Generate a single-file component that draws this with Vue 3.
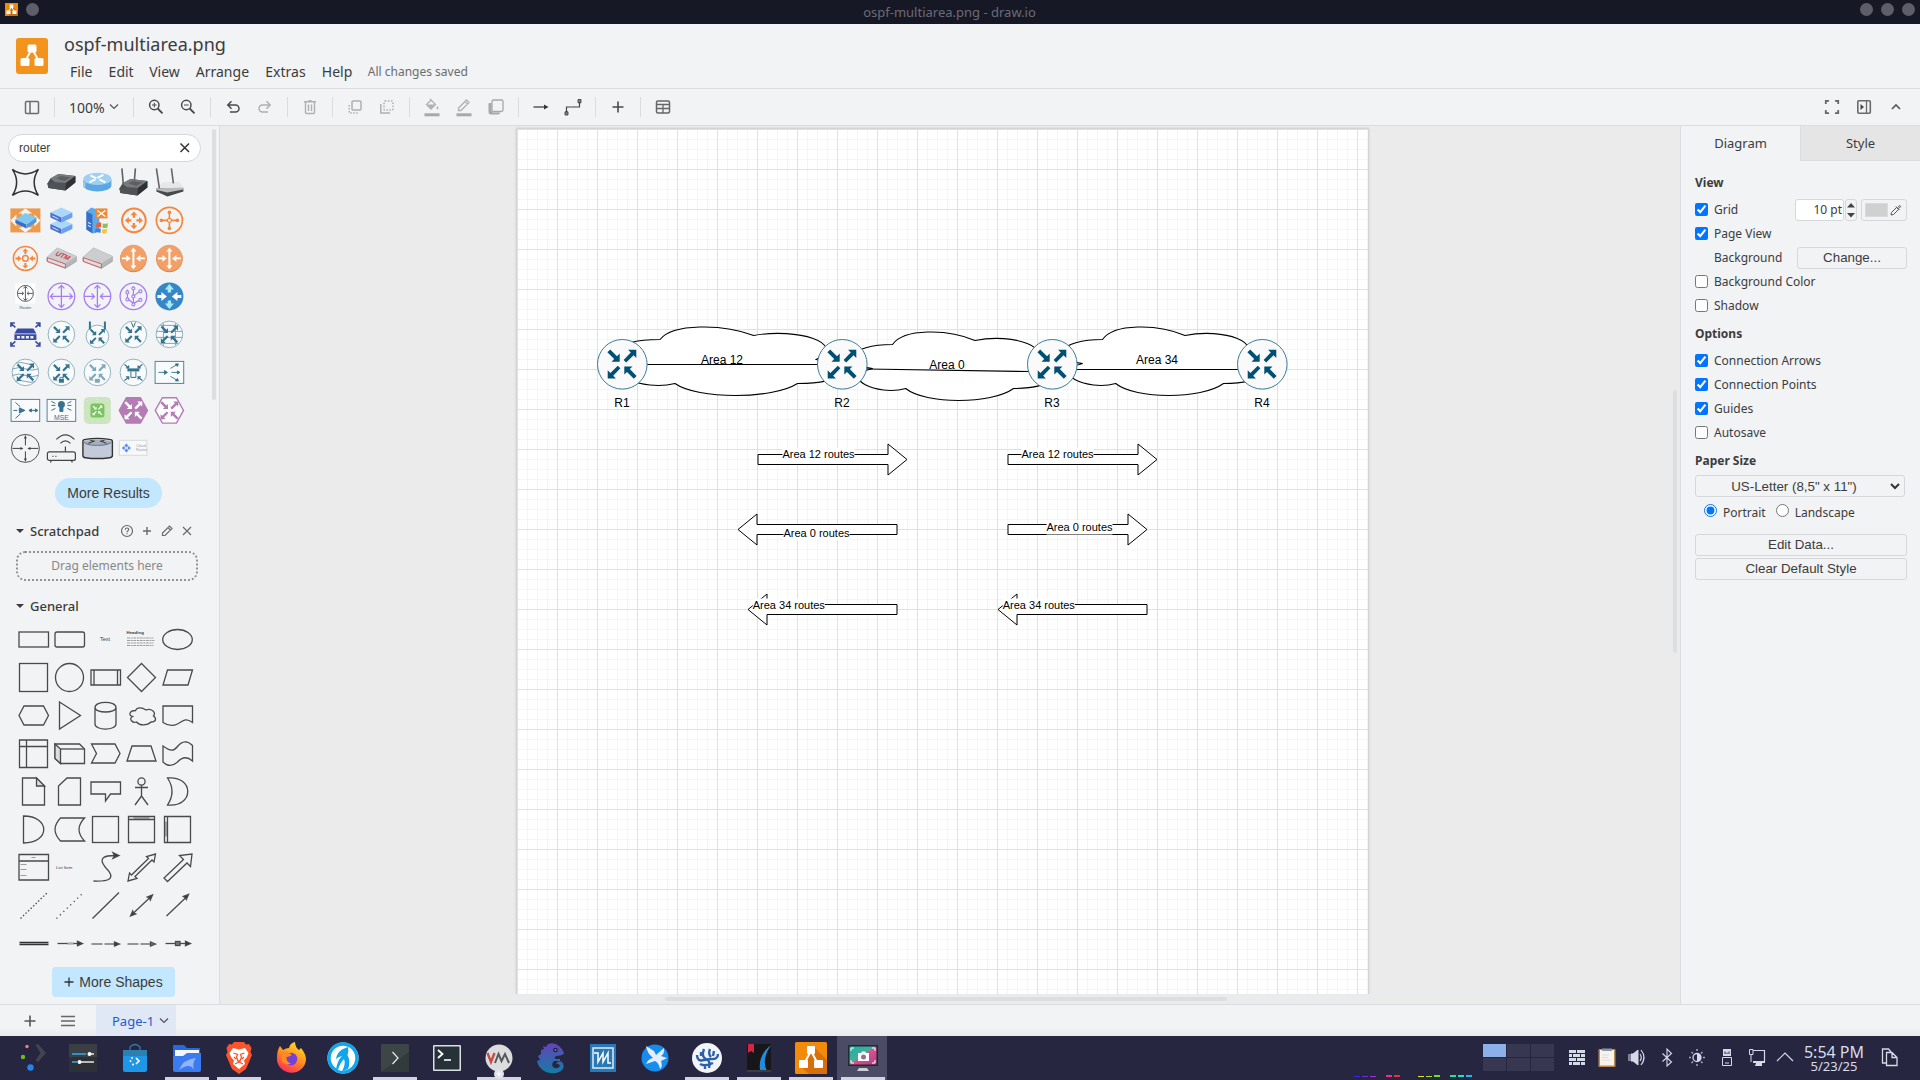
<script setup>
const ROUTER =
  'M-14.6-11.8L-11.8-14.6L-5-7.8L-2.3-10.5V-2.3H-10.5L-7.8-5Z' +
  'M14.6 11.8L11.8 14.6L5 7.8L2.3 10.5V2.3H10.5L7.8 5Z' +
  'M14.3-14.3V-6.1L11.6-8.8L4.2-1.6L1.6-4.2L8.8-11.6L6.1-14.3Z' +
  'M-14.3 14.3V6.1L-11.6 8.8L-4.2 1.6L-1.6 4.2L-8.8 11.6L-6.1 14.3Z'

const menus = [
  { t: 'File', w: 38.6 }, { t: 'Edit', w: 40.6 }, { t: 'View', w: 46.6 },
  { t: 'Arrange', w: 69.5 }, { t: 'Extras', w: 56.5 }, { t: 'Help', w: 46 },
]

/* ---- search result palette (36 x 38 cells) ---- */
const g = (t, s) => `<g transform="${t}">${s}</g>`
const at = (s, k = 1, x = 18, y = 19) => g(`translate(${x} ${y}) scale(${k})`, s)
const rt = (c, k) => at(`<path d="${ROUTER}" fill="${c}"/>`, k)
const ring = (c, f = 'none', w = 1) => `<circle cx="18" cy="19" r="13.3" fill="${f}" stroke="${c}" stroke-width="${w}"/>`
const T = '#36738f'
const TL = '#8fb4c4'
const cisco = (extra = '', c = T) => ring(TL, '#f9fafb') + rt(c, 0.57) + extra
const arrowOut = 'M-3-1.4H-6V-4L-10.5 0L-6 4V1.4H-3Z'
const rot4 = (d, c) => [0, 90, 180, 270].map(a => `<path d="${d}" fill="${c}" transform="rotate(${a})"/>`).join('')
const darkBox = '<path d="M4 20L7 15L15 10.500L32 12.500V19L22 27L5 24.500Z" fill="#4b4e50"/><path d="M7 15L15 10.500L32 12.500L22.500 19.500L12 19Z" fill="#777b7d"/><path d="M4 20L12 19L22.500 19.500L22 27L5 24.500Z" fill="#505355"/><path d="M13 15L17 12.500L27 14L21 17.500Z" fill="#5d6063"/><path d="M22.500 19.500L32 12.500V19L22 27Z" fill="#2f3234"/>'
const orangeRouter = '<circle cx="18" cy="19.4" r="13.4" fill="#d9844c"/><circle cx="18" cy="18.6" r="13.2" fill="#f2a067"/>' +
  at('<path d="M-11.5-.9H-7V-3.3L-2.7 0L-7 3.3V.9H-11.5ZM11.5-.9H7V-3.3L2.7 0L7 3.3V.9H11.5Z" fill="#fff"/><path d="M0-11L3-7H1V7H3L0 11L-3 7H-1V-7H-3Z" fill="#fff"/>')
const server = y => `<path d="M7 ${y}L18 ${y - 5}L29 ${y}L18 ${y + 5}Z" fill="#a9d8f8"/><path d="M7 ${y}L18 ${y + 5}V${y + 10}L7 ${y + 5}Z" fill="#4a6fd0"/><path d="M29 ${y}L18 ${y + 5}V${y + 10}L29 ${y + 5}Z" fill="#6da0ee"/><path d="M9 ${y + 3.5}L15 ${y + 6.5}" stroke="#dceaff" stroke-width="1"/>`
const redBox = t => `<path d="M3.5 18L14 8.5L33 17V22L22 29L3.5 22Z" fill="#b4b6b8" stroke="#8f9193" stroke-width=".5"/><path d="M3.5 18L14 8.5L33 17L22 24Z" fill="#cbcdce"/><path d="M4 18.3L22 24.6V28.5L4 22Z" fill="#e2dcdc" stroke="#d3555c" stroke-width=".9"/>${t}`
const hex = (f, c) => `<path d="M3.9 19L11 6.3H25L32.1 19L25 31.7H11Z" fill="${f}" stroke="#b57bb5" stroke-width="1.4"/>` + at(`<path d="${ROUTER}" fill="${c}"/>`, 0.62)
const results = [
  '<path d="M5 6Q18 15 31 6Q22.500 19 31 32Q18 23 5 32Q13.500 19 5 6Z" fill="none" stroke="#333" stroke-width="1.5"/>',
  darkBox,
  '<path d="M4 16V22A14 6 0 0 0 32 22V16Z" fill="#5ba7e4"/><ellipse cx="18" cy="15.500" rx="14" ry="6.200" fill="#9fd0f4"/><path d="M11 12L17 15M24 11.500L18 14.500M10 19L16 16M26 19L20 16" stroke="#fff" stroke-width="2"/><path d="M5 19V24" stroke="#9bcbf0" stroke-width="2"/>',
  g('translate(0 5)', darkBox) + '<path d="M6.500 5L8 22M20 5L19 17" stroke="#5f6365" stroke-width="1.600"/>',
  '<path d="M5 25L11 19L28 18L32 25Z" fill="#e6e8e8"/><path d="M5 25H32V28L16 33L5 28Z" fill="#45494b"/><path d="M5 25L32 24V26L16 29L5 26.500Z" fill="#b8bbbc"/><path d="M5 5L8 25M20 5L22 20" stroke="#666" stroke-width="1.600"/>',
  '<rect x="3" y="7" width="30" height="24" fill="#ef9a4b"/><path d="M3 19L9 13V17H13L15 12H11L18 7L25 12H21L23 17H27V13L33 19L27 25V21H23L21 26H25L18 31L11 26H15L13 21H9V25Z" fill="#f6f4f0"/><path d="M8 18L18 11.500L29 16L19 23Z" fill="#82c7f0"/><path d="M8 18L19 23V27L8 21.500Z" fill="#3470c9"/><path d="M29 16L19 23V27L29 20.500Z" fill="#4f98e0"/>',
  server(22.500) + server(11),
  '<path d="M7 10L12 6L20 9V29L14 32L7 28Z" fill="#5eaae8"/><path d="M7 10L13 13V32L7 28Z" fill="#376dc8"/><path d="M8.500 24L11.500 25.500M8.500 21L11.500 22.500" stroke="#fff"/><rect x="16" y="7" width="12" height="10" fill="#f08a32"/><path d="M18 9L26 15M26 9L18 15" stroke="#fff" stroke-width="1.300"/><path d="M17 22Q20 20 22 21.500L21.500 26Q19 25 16.500 26.500Z" fill="#e0663a"/><path d="M23.500 22Q26 23 28.500 21.500L28 26Q25 27 23 26Z" fill="#8cc152"/><path d="M16 27.500Q19 26 21.500 27.500L21 31.500Q18 30 15.500 31.500Z" fill="#3d80dd"/><path d="M23 27.500Q25 28.500 28 27L27 31.500Q25 32.500 22.500 31.500Z" fill="#f5c63c"/>',
  '<circle cx="18.500" cy="19" r="11.800" fill="none" stroke="#f5863c" stroke-width="2"/>' + at(rot4(arrowOut, '#f5863c'), 0.85, 18.5, 19),
  '<circle cx="18" cy="19" r="13" fill="none" stroke="#f5863c" stroke-width="1.700"/>' + at('<circle r="2" fill="none" stroke="#f5863c" stroke-width="1.200"/><path d="M0-2V-8M0 2V8M-2 0H-8M2 0H8" stroke="#f5863c" stroke-width="1.600"/><circle cy="-8" r="1.800" fill="#f5863c"/><circle cy="8" r="1.800" fill="#f5863c"/><circle cx="8" r="1.800" fill="#f5863c"/><circle cx="-8" r="1.800" fill="#f5863c"/>'),
  '<circle cx="18" cy="19" r="12" fill="none" stroke="#f5863c" stroke-width="1.500"/>' + at('<circle r="2.800" fill="none" stroke="#f5863c" stroke-width="1.500"/><path d="M-10-1H-7.500V-3L-4 0L-7.500 3V1H-10ZM10-1H7.500V-3L4 0L7.500 3V1H10Z" fill="#f5863c"/><path d="M-1-4.500V-7H-3L0-10L3-7H1V-4.500ZM-1 4.500V7H-3L0 10L3 7H1V4.500Z" fill="#f5863c"/>'),
  redBox('<text x="0" y="0" transform="translate(11 15.500) rotate(22) skewX(-20)" font-family="Liberation Sans, sans-serif" font-weight="700" font-size="6.800" fill="#d9383f">UTM</text>'),
  redBox(''), orangeRouter, orangeRouter,
  '<rect x="8" y="6" width="20" height="20" fill="#fff"/><circle cx="18" cy="16" r="8" fill="none" stroke="#555c66" stroke-width="1"/><path d="M18 9V23M10.500 16H16M25.500 16H20M16 11L18 9L20 11M16 21L18 23L20 21M14.500 14.300L16.300 16L14.500 17.700M21.500 14.300L19.700 16L21.500 17.700" fill="none" stroke="#555c66"/><text x="18" y="32" text-anchor="middle" font-family="Liberation Sans, sans-serif" font-size="4" fill="#555">Router</text>',
  ring('#a77ef0', 'none', 1.3) + '<path d="M18 8V30M7 19H29M15 11L18 8L21 11M15 27L18 30L21 27M10 16L7 19L10 22M26 16L29 19L26 22" fill="none" stroke="#a77ef0" stroke-width="1.300"/>',
  ring('#a77ef0', 'none', 1.3) + '<path d="M18 8V30M5 19H15M31 19H21M15 11L18 8L21 11M15 27L18 30L21 27M12 16L15 19L12 22M24 16L21 19L24 22" fill="none" stroke="#a77ef0" stroke-width="1.300"/>',
  ring('#a77ef0', 'none', 1.3) + '<path d="M12 12V21L18 26V9M18 19L24 14M18 26L24 23" fill="none" stroke="#a77ef0" stroke-width="1.200"/>' + [[12, 15], [12, 22], [18, 27], [18, 11], [25, 14], [25, 22.5], [18, 19]].map(p => `<circle cx="${p[0]}" cy="${p[1]}" r="1.500" fill="#f1f3f4" stroke="#a77ef0" stroke-width="1.100"/>`).join(''),
  '<circle cx="18" cy="19" r="14" fill="#3787c6"/>' + at('<path d="M-12-1.500H-8V-4.500L-2.500 0L-8 4.500V1.500H-12ZM12-1.500H8V-4.500L2.500 0L8 4.500V1.500H12Z" fill="#fff"/><path d="M-1.700-4V-7H-4.500L0-12.500L4.500-7H1.700V-4ZM-1.700 4V7H-4.500L0 12.500L4.500 7H1.700V4Z" fill="#a5ecfb"/>'),
  '<path d="M10 13H26L29 18H7Z M7 18.800H29V24.500H7Z" fill="#3a4ba4"/><path d="M9.500 20.500H12.500V23H9.500ZM14 20.500H17V23H14ZM18.500 20.500H21.500V23H18.500ZM23 20.500H26V23H23Z" fill="#f1f3f4"/><path d="M8 12L3.500 8M3.500 11.500V7.500H7.500M28 12L32.500 8M32.500 11.500V7.500H28.500M8 26L3.500 30M3.500 26.500V30.500H7.500M28 26L32.500 30M32.500 26.500V30.500H28.500" fill="none" stroke="#3a4ba4" stroke-width="1.500"/>',
  cisco(),
  '<circle cx="18" cy="21" r="11.300" fill="#f9fafb" stroke="#8fb4c4"/>' + at(`<path d="${ROUTER}" fill="${T}"/>`, 0.52, 18, 21) + `<path d="M10.500 6V14M25.500 6V14" stroke="${T}" stroke-width="2"/>`,
  cisco(`<path d="M16 7L18 12L20 7" fill="none" stroke="${T}"/>`),
  ring(TL, '#f9fafb') + `<path d="M5 16H31M5 22H31M9 10H27M9 28H27M12 8V30M24 8V30" stroke="#6c9eb3" stroke-width=".9" fill="none"/>` + rt(T, 0.6),
  ring(TL, '#f9fafb') + '<path d="M9 10Q13 8 18 10T27 10M5 15.500Q11 13 18 15.500T31 15.500M5 22Q11 19.500 18 22T31 22M8 28Q12 26 18 28T28 28" fill="none" stroke="#6c9eb3" stroke-width=".9"/>' + rt(T, 0.6),
  cisco(`<rect x="15.500" y="25.500" width="5" height="3.800" fill="${T}"/><path d="M16.500 25.500V24H19.500V25.500" fill="none" stroke="${T}" stroke-width=".8"/>`),
  cisco('<rect x="15.500" y="25.500" width="5" height="3.800" fill="#7fa9bb"/>', '#7fa9bb'),
  ring(TL, '#f9fafb') + `<path d="M12 15H24V18H12Z" fill="${T}"/><path d="M15.500 18V24H20.500V18" fill="none" stroke="${T}"/><path d="M9 11L13 14M27 11L23 14M9 27L13 24M27 27L23 24M10.500 14.500H13.300V12M25.500 14.500H22.700V12M10.500 23.500H13.300V26M25.500 23.500H22.700V26" stroke="${T}" stroke-width="1.200" fill="none"/>`,
  `<rect x="3.700" y="8" width="28.600" height="22" fill="#f9fafb" stroke="#4c87a0"/><path d="M7 19H15M13 17L16 19L13 21ZM19 15L26 11M24 10.500L27 10.500L26 13ZM20 19H28M26 17.500L28.500 19L26 20.500ZM19 23L26 27M24 27.500L27 27.500L26 25Z" fill="${T}" stroke="${T}" stroke-width=".9"/>`,
  `<rect x="3.700" y="8" width="28.600" height="22" fill="#f9fafb" stroke="#4c87a0"/><path d="M6 19H10M12 16.500L17.500 19L12 21.500ZM8 11L13 15.500M8 27L13 22.500M22 19H29M24 17.500L21.500 19L24 20.500ZM28 17.500L30.500 19L28 20.500Z" fill="${T}" stroke="${T}" stroke-width="1"/>`,
  `<rect x="3.700" y="8" width="28.600" height="22" fill="#f9fafb" stroke="#4c87a0"/><circle cx="18" cy="13" r="3.500" fill="${T}"/><path d="M16.500 16H19.500V20H16.500ZM8 10L12 12M8 14H12M8 19L12 17M28 10L24 12M28 14H24M28 19L24 17" fill="${T}" stroke="${T}" stroke-width="1"/><text x="18" y="28.800" text-anchor="middle" font-family="Liberation Sans, sans-serif" font-size="6.800" fill="${T}">MSE</text>`,
  '<rect x="4.500" y="5.500" width="27" height="27" rx="5" fill="#cbe6be"/><rect x="11" y="12" width="14" height="14" rx="2.500" fill="#79c45f"/><path d="M8 9V9.500M8 29V29.500M28 9V9.500M28 29V29.500M7 19H7.500M29 19H29.500M18 8V8.500M18 30V30.500" stroke="#eef7ea" stroke-width="1.200"/>' + at(`<path d="${ROUTER}" fill="#fff"/>`, 0.34),
  hex('#b57bb5', '#fff'), hex('#fff', '#b57bb5'),
  '<circle cx="18" cy="19" r="14" fill="none" stroke="#555"/><path d="M18 6V16M18 32V22M5 19H15M31 19H21" stroke="#444" fill="none"/><path d="M16.500 9L18 6L19.500 9ZM16.500 29L18 32L19.500 29ZM13 17.500L16 19L13 20.500ZM23 17.500L20 19L23 20.500Z" fill="#444"/>',
  '<rect x="4" y="22.500" width="28" height="8.500" rx="2" fill="none" stroke="#444" stroke-width="1.200"/><path d="M22 22V17M8 31L7 33M28 31L29 33M9 27H10M12 27H13M17 14Q22 9 27 14M13 10Q22 1 31 10" fill="none" stroke="#444" stroke-width="1.200"/>',
  '<path d="M3.500 12Q3.500 10 6 10Q18 8 30 10Q33 10 33 12V26Q33 28 30 28.300Q18 30 6 28.300Q3.500 28 3.500 26Z" fill="#c3cad8" stroke="#333" stroke-width="1.400"/><path d="M4.500 12Q18 8.500 32 12Q31 15 26 15.500Q18 16.500 10 15.500Q5 15 4.500 12Z" fill="#a5aebd"/><path d="M4.500 13Q8 16 18 16Q28 16 32 13" fill="none" stroke="#6e7684"/><path d="M9 14L15 11.500M27 14L21 11.500M11 11L15 12M25 11L21 12" stroke="#333"/>',
  '<rect x="4" y="11" width="27.500" height="15" fill="#f7f8fa" stroke="#dcdee2" stroke-width="1.200"/><path d="M11 14L13 16L11 18L9 16ZM11 19L13 21L11 23L9 21ZM8.500 16.500L10 18.500L8.500 20.500L6.500 18.500ZM13.500 16.500L15.500 18.500L13.500 20.500L12 18.500Z" fill="#5d8ff0"/><text x="20.500" y="17.500" font-family="Liberation Sans, sans-serif" font-size="3.800" fill="#9a9ea4">Cloud</text><text x="20.500" y="22" font-family="Liberation Sans, sans-serif" font-size="3.800" fill="#9a9ea4">Router</text>',
]

/* ---- general shapes palette ---- */
const tx = (x, y, s, t, a = 'middle', w = 400) => `<text x="${x}" y="${y}" font-size="${s}" text-anchor="${a}" font-weight="${w}" font-family="Liberation Sans, sans-serif" fill="#3c3c3c" stroke="none">${t}</text>`
const general = [
  '<rect x="3.500" y="11.500" width="29.500" height="15"/>',
  '<rect x="3.500" y="11.500" width="29.500" height="15" rx="2"/>',
  tx(17.5, 20.5, 5.5, 'Text'),
  tx(3, 13.5, 4.4, 'Heading', 'start', 700) + '<path d="M3.500 17.500H30M3.500 20H31M3.500 22.500H30M3.500 25H30" stroke-width=".8" stroke-dasharray="3 .7 2 .6" stroke="#888"/>',
  '<ellipse cx="18" cy="19" rx="14.800" ry="10"/>',
  '<rect x="4" y="5" width="28" height="28"/>',
  '<circle cx="18" cy="19" r="14"/>',
  '<path d="M3.500 11.500H33V26.500H3.500ZM6.500 11.500V26.500M30 11.500V26.500"/>',
  '<path d="M18 5L32 19L18 33L4 19Z"/>',
  '<path d="M8 11.500H33L28.500 26.500H3.500Z"/>',
  '<path d="M8.500 9.500H28L33 19L28 28.500H8.500L3.500 19Z"/>',
  '<path d="M8 5.500L29 19L8 32.500Z"/>',
  '<path d="M7.500 11V27.500C7.500 34.200 28.500 34.200 28.500 27.500V11C28.500 4.200 7.500 4.200 7.500 11C7.500 17 28.500 17 28.500 11"/>',
  '<path d="M12 14C6 14 4.500 19 9 20C4.500 22.500 9.500 27 13 25.500C16 29.500 24 29 27.500 25.500C33 25.500 33 21.500 30 19.500C33 15.500 27.500 11.500 22.500 13.500C18.500 10.500 13.500 10.500 12 14Z"/>',
  '<path d="M3.500 9.500H33V26C25.500 20.500 23 25 18 27.500Q11 31 3.500 26Z"/>',
  '<path d="M4 5.500H32V33H4ZM4 12H32M11 5.500V33"/>',
  '<path d="M3.500 9.500H28L33 14.500V29H9L3.500 24Z"/><path d="M3.500 9.500L9 14.500V29L3.500 24Z" fill="#ddd"/><path d="M9 14.500H33"/>',
  '<path d="M4 9.500H27.500L32.500 19L27.500 28.500H4L9 19Z"/>',
  '<path d="M8.500 11.500H27.500L32.500 26.500H3.500Z"/>',
  '<path d="M3.500 11.500C11 17 14 17 18 12C23 6 28 6 33 11V26.500C28 22 23 22 18 27.500C13 32 8 32 3.500 27.500Z"/>',
  '<path d="M7 5.500H21L29 13.500V32.500H7Z"/><path d="M21 5.500V13.500H29Z" fill="#ddd"/>',
  '<path d="M15.500 5.500H29V32.500H7V13.500Z"/>',
  '<path d="M3.500 9.500H33V21.500H23L18 28.500V21.500H3.500Z"/>',
  '<circle cx="18" cy="9" r="3.600"/><path d="M18 12.500V23.500M11.500 15H24.500M18 23.500L11.500 32.500M18 23.500L24.500 32.500"/>',
  '<path d="M8 5.500C35 3 35 35 8 32.500Q17 19 8 5.500Z"/>',
  '<path d="M8 5.500C35 5.500 35 32.500 8 32.500Z"/>',
  '<path d="M9 7.500H33Q22 19 33 30.500H9Q-2 19 9 7.500Z"/>',
  '<rect x="5" y="6" width="26" height="26"/>',
  '<path d="M5 6H31V32H5ZM5 9H31"/><path d="M10 7.500H26" stroke="#777"/>',
  '<path d="M5 6H31V32H5ZM8 6V32"/><path d="M6.500 11V26" stroke="#777"/>',
  '<path d="M3.500 6H33V31.500H3.500ZM3.500 12.500H33"/><path d="M16 9H20M5 16H11M5 21H11M5 27H11" stroke="#888" stroke-width=".8"/>',
  tx(4.5, 20.5, 4.3, 'List Item', 'start'),
  '<path d="M6 32.500C20 33 30 31 18 19C10 9 17 7 28 7"/><path d="M31.500 7L25.500 4.200L27 7L25.500 9.800Z" fill="#333"/>',
  '<path d="M32 5.500L30.500 13.500L28.500 11.500L11.500 28L13.500 30L4.500 32.500L6 24.500L8 26.500L25 10L23 8Z"/>',
  '<path d="M32.500 5.500L31 18L27.500 14.500L8 33L4.500 29.500L24 11L20 7Z"/>',
  '<path d="M5 32L32 6" stroke-dasharray="1.500 2"/>',
  '<path d="M5 32L32 6" stroke-dasharray="1.200 3.600"/>',
  '<path d="M5 32L31.500 6"/>',
  '<path d="M9 27.500L27 10.500"/><path d="M29 8.500L26.800 13.500L26 11.500L23.800 10.500ZM7 29.500L12.200 27.500L10 26.500L9.200 24.500Z" fill="#333"/>',
  '<path d="M7 29.500L27 10.500"/><path d="M29 8L26.800 13L26 11.500L23.800 10Z" fill="#333"/>',
  '<path d="M4 18.100H33M4 20H33" stroke-width="1.500" stroke="#333"/>',
  '<path d="M6 19H28"/><path d="M31 19L26 16.800V21.200Z" fill="#333"/><path d="M16 19H22" stroke="#aaa" stroke-width="2"/>',
  '<path d="M4 19.500H28" stroke="#777" stroke-width="1.500" stroke-dasharray="11 2"/><path d="M32 19.500L27 17.500V21.500Z" fill="#333"/>',
  '<path d="M4 19.500H28" stroke="#777" stroke-width="1.500" stroke-dasharray="11 2"/><path d="M32 19.500L27 17.500V21.500Z" fill="#777"/>',
  '<path d="M6 19H28"/><path d="M31 19L26 16.800V21.200Z" fill="#333"/><rect x="16" y="17" width="4.500" height="4" fill="#777"/>',
]

/* ---- toolbar ---- */
const K = '#5a5a5a'
const D = '#b0b0b0'
const st = (d, c = K, w = 1.5, x = '') => `<path d="${d}" fill="none" stroke="${c}" stroke-width="${w}" ${x}/>`
const lens = '<circle cx="14.300" cy="14" r="4.700" fill="none" stroke="#4a4a4a" stroke-width="1.500"/><path d="M17.700 17.500L22.500 22.300" stroke="#4a4a4a" stroke-width="1.800"/>'
const tools = [
  { i: st('M10.5 10.500H21.500A1 1 0 0 1 22.500 11.500V21.500A1 1 0 0 1 21.500 22.500H10.500A1 1 0 0 1 9.500 21.500V11.500A1 1 0 0 1 10.500 10.500ZM14 10.500V22.500', '#6c6c6c') },
  { sep: 1 }, { zoom: 1 }, { sep: 1 },
  { i: lens + st('M12 14H16.600M14.300 11.700V16.300', '#4a4a4a', 1) },
  { i: lens + st('M12 14H16.600', '#4a4a4a', 1) },
  { sep: 1 },
  { i: st('M11 14H18.500A3.500 3.500 0 0 1 18.500 21H13M14.500 10.300L10.800 14L14.500 17.700', '#4a4a4a') },
  { i: st('M21 14H13.500A3.500 3.500 0 0 0 13.500 21H19M17.500 10.300L21.200 14L17.500 17.700', D) },
  { sep: 1 },
  { i: st('M11.5 11.500V21.500A1 1 0 0 0 12.500 22.500H19.500A1 1 0 0 0 20.500 21.500V11.500M10 10.800H22M14.500 9.800H17.500M14.500 13.500V20M17.500 13.500V20', D, 1.4) },
  { sep: 1 },
  { i: '<rect x="13" y="10" width="9" height="9" rx="1" fill="none" stroke="#b0b0b0" stroke-width="1.500"/>' + st('M10.200 14V22H19', D, 1.5, 'stroke-dasharray="1.500 1.500"') },
  { i: '<rect x="13" y="10" width="9" height="9" rx="1" fill="none" stroke="#b0b0b0" stroke-width="1.500" stroke-dasharray="1.500 1.500"/>' + st('M9.800 13V22H19', D, 1.5) },
  { sep: 1 },
  { i: st('M14 8L19.500 13.500L15 18L10.500 13.500L15.500 8.800', D, 1.3) + '<path d="M11 13.500H19L15 17.500ZM21.500 15Q23.500 18 21.500 18.300Q19.500 18 21.500 15Z" fill="#b0b0b0"/><rect x="8.500" y="22.300" width="15" height="3" fill="#a8a8a8"/>' },
  { i: st('M10.500 19.500V17L18.500 9L21 11.500L13 19.500ZM17 10.500L19.500 13', D, 1.3) + '<rect x="8.500" y="22.300" width="15" height="3" fill="#a8a8a8"/>' },
  { i: '<path d="M11.500 12H9.500Q8.500 12 8.500 13V21Q8.500 23.500 11 23.500H18.500Q20 23.500 20 21.500H13.500Q11.500 21.500 11.500 19Z" fill="#a8a8a8"/><rect x="12" y="9" width="11" height="11.500" rx="1.500" fill="#f1f3f4" stroke="#a8a8a8" stroke-width="1.300"/>' },
  { sep: 1 },
  { i: st('M8.5 16H21', '#333', 1.2) + '<path d="M23.500 16L19 13.500V18.500Z" fill="#333"/>' },
  { i: st('M9.500 21V16H22.500V11', '#444', 1.2) + '<path d="M8 20.800H11V24H8ZM21 8.500H24V11.800H21Z" fill="#888" stroke="#333" stroke-width=".8"/>' },
  { sep: 1 },
  { i: st('M16 10.500V21.500M10.500 16H21.500', '#4a4a4a', 1.6) },
  { sep: 1 },
  { i: '<rect x="9.500" y="10" width="13" height="12" rx="1.500" fill="none" stroke="#666" stroke-width="1.500"/>' + st('M9.500 13.500H22.500M9.500 17.500H22.500M16 13.500V22', '#666', 1.3) },
]

/* ---- diagram ---- */
const cloud = (x, y, w, h) => {
  const p = (a, b) => `${(x + a * w).toFixed(2)} ${(y + b * h).toFixed(2)}`
  const c = (...a) => `C${p(a[0], a[1])} ${p(a[2], a[3])} ${p(a[4], a[5])}`
  return `M${p(0.25, 0.25)}` + c(0.05, 0.25, 0, 0.5, 0.16, 0.55) + c(0, 0.66, 0.18, 0.9, 0.31, 0.8) +
    c(0.4, 1, 0.7, 1, 0.8, 0.8) + c(1, 0.8, 1, 0.6, 0.875, 0.5) + c(1, 0.3, 0.8, 0.1, 0.625, 0.2) +
    c(0.5, 0.05, 0.3, 0.05, 0.25, 0.25) + 'Z'
}
const clouds = [cloud(80.5, 190.5, 250, 80), cloud(320.5, 195.5, 220, 80), cloud(530.5, 190.5, 220, 80)]
const routers = [{ n: 'R1', x: 105.3 }, { n: 'R2', x: 325.3 }, { n: 'R3', x: 535.3 }, { n: 'R4', x: 745.3 }]
const block = (tail, neck, tip, y) => `M${tail} ${y - 5}H${neck}V${y - 15.5}L${tip} ${y}L${neck} ${y + 15.5}V${y + 5}H${tail}Z`
const flows = [
  { d: block(241, 371, 390, 330.5), t: 'Area 12 routes', x: 265.500, y: 328.500, w: 72 },
  { d: block(491, 621, 640, 330.5), t: 'Area 12 routes', x: 504.500, y: 328.500, w: 72 },
  { d: block(380, 240, 221, 400.5), t: 'Area 0 routes', x: 266.500, y: 407.500, w: 66 },
  { d: block(491, 611, 630, 400.5), t: 'Area 0 routes', x: 529.500, y: 401.500, w: 66 },
  { d: block(380, 250, 231, 480.5), t: 'Area 34 routes', x: 235.800, y: 479.500, w: 72 },
  { d: block(630, 500, 481, 480.5), t: 'Area 34 routes', x: 485.800, y: 479.500, w: 72 },
]

/* ---- taskbar (28 x 28 icons) ---- */
const apps = [
  { i: '<circle cx="10" cy="2.500" r="1.700" fill="#f0806a"/><circle cx="6" cy="13" r="2.200" fill="#6ebd1c"/><circle cx="13.500" cy="23.500" r="3.200" fill="#1e86f0"/><path d="M18.500 1L21 0L29 9L21 18L18.500 16.500L23.500 9Z" fill="#42454d"/>' },
  { i: '<rect width="28" height="28" rx="1" fill="#2d3036"/><rect width="28" height="13" fill="#3a3f44"/><path d="M3 10H17M3 18H8" stroke="#35a9ee" stroke-width="1.500"/><path d="M21 10H25M11 18H25" stroke="#e8e8e8" stroke-width="1.500"/><circle cx="20.500" cy="10" r="2" fill="#fff"/><circle cx="10.500" cy="18" r="2" fill="#fff"/>' },
  { i: '<path d="M9 7V3Q14-2 19 3V7" fill="none" stroke="#2f7fae" stroke-width="1.200"/><path d="M2 6H26V26Q26 28 24 28H4Q2 28 2 26Z" fill="#1e97e8"/><path d="M2 6H26V12H2Z" fill="#2d7fb0"/><path d="M15 14L18 17L15 20" fill="none" stroke="#fff" stroke-width="1.600"/><circle cx="11" cy="14" r=".9" fill="#fff"/><circle cx="9.500" cy="17" r=".9" fill="#fff"/><circle cx="12" cy="20.500" r="1" fill="#fff"/>' },
  { i: '<path d="M0 2Q0 1 1 1H11L14 4H26Q27 4 27 5V14H0Z" fill="#2669df"/><path d="M2 6H26V14H2Z" fill="#f4f6fa"/><path d="M0 12H10L14 9H28V26Q28 28 26 28H2Q0 28 0 26Z" fill="#3a7bf0"/><path d="M6 26Q10 15 23 14Q19 19 21 26Q17 18 6 26Z" fill="#8fb4f8"/>', u: 1 },
  { i: '<path d="M9-2H19L21 .5L24 0L26.500 4L25.500 8L27 11L21 25L14 30L7 25L1 11L2.500 8L1.500 4L4 0L7 .5Z" fill="#fb542b"/><path d="M8 4L14 5.500L20 4L23.500 9L22 13L19 16.500L20 20L14 25L8 20L9 16.500L6 13L4.500 9Z" fill="#fff"/><path d="M8.500 9L12.500 10.500L11.500 13L13 17H15L16.500 13L15.500 10.500L19.500 9M9 13L11 15M19 13L17 15M10 20L14 18L18 20" stroke="#fb542b" stroke-width="1.300" fill="none"/>', u: 1 },
  { i: '<defs><linearGradient id="ff" x1=".8" y1="0" x2=".3" y2="1"><stop offset="0" stop-color="#ffe226"/><stop offset=".5" stop-color="#ff9020"/><stop offset="1" stop-color="#ff2a5c"/></linearGradient></defs><path d="M0 14Q0 6 3 2L6 6Q9 4 12 4Q13-1 18-2Q18 3 22 6L24 4Q29 10 29 15.500A14.500 14 0 0 1 0 14Z" fill="url(#ff)"/><circle cx="14" cy="15" r="6.300" fill="#7540d8"/><path d="M4 9Q9 7 12 9L15 11Q12 13 9.500 13Q9 18 14 19.500Q9 22 5 18Z" fill="#ff8a22"/>' },
  { i: '<circle cx="14" cy="14" r="15.500" fill="#fff"/><circle cx="14" cy="14" r="14" fill="none" stroke="#11a5ed" stroke-width="3.400"/><path d="M7 26Q8 17 13 12Q9 13 7 15Q8 8 14 5L19 3Q20 7 18.500 11Q22 18 19 25Q13 28 7 26Z" fill="#11a5ed"/><path d="M9 26Q11 19 15 15Q17 20 13 27Z" fill="#fff"/>' },
  { i: '<rect width="28" height="28" rx="1" fill="#3d4646"/><path d="M0 28L28 8V28Z" fill="#323a3c"/><path d="M11.500 8L17 14L11.500 20" fill="none" stroke="#e8eeee" stroke-width="1.200"/>', u: 1 },
  { i: '<rect x="0" y="1" width="28" height="26" rx="1" fill="#dce0e4"/><rect x="1.500" y="2.500" width="25" height="23" fill="#263238"/><path d="M5 6L9.500 10L5 14" fill="none" stroke="#fff" stroke-width="1.800"/><path d="M11 16H18" stroke="#fff" stroke-width="1.600"/>' },
  { i: '<circle cx="14" cy="14" r="13.500" fill="#dcdcdf"/><path d="M2.500 9L6 18L9.500 9" fill="none" stroke="#c84b46" stroke-width="2.400"/><path d="M10 19L13.500 10L16.500 17L20 10L24 19" fill="none" stroke="#56595c" stroke-width="2"/>', c: 1, u: 1 },
  { i: '<defs><linearGradient id="ch" x1="0" y1="0" x2="0" y2="1"><stop offset="0" stop-color="#6444b8"/><stop offset="1" stop-color="#147ca6"/></linearGradient></defs><path d="M6 2L9 3L11 0Q18-2 22 2Q26 5 27 10Q24 12 19 12Q16 14 19 15H23V17H17Q14 20 16 23Q20 26 23 22Q22 19 19 20Q21 16 25 18Q29 23 24 27Q18 31 9 28Q1 24 0 17L3 16L1 12L4 10L4 6L7 5Z" fill="url(#ch)"/><circle cx="18.500" cy="6" r="2.300" fill="#1b203e"/><circle cx="18.500" cy="6" r="1" fill="#8d74dc"/>' },
  { i: '<rect x="1" y="0" width="26" height="28" fill="#2878b5"/><rect x="4" y="4" width="20" height="20" fill="none" stroke="#dcebf8" stroke-width="1.500"/><path d="M5 9H9V18L14 9V18L19 9V19H22" fill="none" stroke="#fff" stroke-width="1.500"/>' },
  { i: '<circle cx="14" cy="14" r="13.500" fill="#168cec"/><path d="M5 2L13 7L15 11L23 4Q24 9 20 12L26 14L20 17Q22 22 19 25Q18 19 14 17L5 20Q7 15 12 14Q6 9 5 2Z" fill="#e5edf8"/>' },
  { i: '<circle cx="14" cy="14" r="15" fill="#f2f4f9"/><path d="M4 11Q4 18 11 16L17 15Q25 16 25 10M11 5Q8 13 13 15T16 24M17 5Q15 10 18 13M7 20Q12 23 20 19M8 8V12M21 7L20 12M12 20V25" fill="none" stroke="#2c60a9" stroke-width="2.400"/>', u: 1 },
  { i: '<rect x="2" y="0" width="24" height="28" fill="#171719"/><path d="M3 0H9V9L6 7L3 9Z" fill="#d22642"/><path d="M26 1Q13 11 15 26L22 27Q16 16 26 1Z" fill="#238adc"/><path d="M2 26H26V28H2Z" fill="#3c3d42"/>', u: 1 },
  { i: '<rect x="-2" y="-2" width="32" height="32" rx="1.500" fill="#f28b0c"/><path d="M17 3L30 16V30H12L4 23Z" fill="#d96f0a"/><path d="M14 7L7 20M14 7L21 20" stroke="#fff" stroke-width="2"/><rect x="10" y="2" width="8" height="8" rx="1" fill="#fff"/><rect x="2" y="16" width="9" height="8" rx="1" fill="#fff"/><rect x="17" y="16" width="9" height="8" rx="1" fill="#fff"/>', u: 1 },
  { i: '<defs><linearGradient id="sp" x1="0" y1="0" x2="1" y2="1"><stop offset="0" stop-color="#19b3aa"/><stop offset=".48" stop-color="#48ab98"/><stop offset=".5" stop-color="#d8528e"/><stop offset="1" stop-color="#b23c8c"/></linearGradient></defs><rect x="-1" y="1" width="30" height="21" fill="#23272e"/><rect x=".5" y="2.500" width="27" height="18" fill="url(#sp)"/><path d="M2 7V4H5M26 7V4H23M2 16V19H5M26 16V19H23" fill="none" stroke="#fff"/><path d="M9 9H12L13 7.500H16L17 9H20V17H9Z" fill="#fff"/><circle cx="14.500" cy="13" r="2.500" fill="#9d6a95"/><path d="M10 24H18L20 27H8Z" fill="#cdd0d4"/>', u: 1, act: 1 },
]
const W = '#d5dae8'
const tray = [
  '<path d="M0 1H7V4H0ZM8 1H16V4H8ZM0 5H3V8H0ZM4 5H11V8H4ZM12 5H16V8H12ZM0 9H7V12H0ZM8 9H16V12H8ZM0 13H3V16H0ZM4 13H11V16H4ZM12 13H16V16H12Z" fill="#d5dae8"/>',
  '<rect x="-.5" y="0" width="17" height="18" rx="1" fill="#b98b52"/><rect x="1" y="1" width="14" height="15.500" fill="#f7f4ee"/><path d="M3-.5H13V2H3Z" fill="#8d98a0"/><path d="M3 6H10M3 8.500H9M3 11H11" stroke="#ddd"/>',
  '<path d="M0 5V12M2 5V12H4L9 16V1L4 5Z" fill="#d5dae8" stroke="#d5dae8"/><path d="M11 5Q13.500 8.500 11 12M12 1Q18 8.500 12 16" fill="none" stroke="#d5dae8" stroke-width="1.200"/>',
  st('M3.500 4.500L12.500 13L8 17V0L12.500 4.500L3.500 12.500', W, 1.1),
  '<circle cx="8" cy="8.500" r="4" fill="none" stroke="#d5dae8" stroke-width="1.300"/><path d="M8 4.500A4 4 0 0 1 8 12.500Z" fill="#d5dae8"/><path d="M8 0V2M8 15V17M0 8.500H2M14 8.500H16M2.500 3L4 4.500M13.500 3L12 4.500M2.500 14L4 12.500M13.500 14L12 12.500" stroke="#a2a4b8" stroke-width="1.500"/>',
  '<path d="M4 0H12V7H4Z" fill="#d5dae8"/><path d="M6 2.500V5M8 3.500V5M10 2.500V5" stroke="#262542"/><path d="M3.500 8.500H12.500V16.500H3.500Z" fill="none" stroke="#d5dae8"/><path d="M6 14H10" stroke="#d5dae8"/>',
  '<path d="M3 1.500H15.500V12.500H5" fill="none" stroke="#d5dae8" stroke-width="1.200"/><path d="M4 12H16V14H4ZM7 14H13V17H6Z" fill="#d5dae8"/><path d="M.5.500H4V5.500H.500ZM2 5.500V13" fill="#262542" stroke="#d5dae8"/>',
]
const meters = [[1354, '#3429e0'], [1362, '#6b2be0'], [1370, '#a92be2'], [1386, '#f02c90', 1], [1394, '#ee2c3c', 1], [1418, '#e8e21f'], [1426, '#a5e61f'], [1434, '#63e61f', 1], [1450, '#1fe68a', 1], [1458, '#1fe0cc', 1], [1466, '#1fb8ec', 1]]
</script>

<template>
  <div class="screen">
    <div class="titlebar">
      <svg class="tb-left" width="60" height="24">
        <rect x="5" y="3" width="13" height="13" fill="#f08705" /><path d="M11 5L18 12V16H9Z" fill="#d06a08" />
        <path d="M11.500 7L8 12.500M11.500 7L15 12.500" stroke="#fff" />
        <rect x="9.700" y="4.500" width="3.600" height="3.600" fill="#fff" /><rect x="6.500" y="10.500" width="4" height="3.500" fill="#fff" /><rect x="12.500" y="10.500" width="4" height="3.500" fill="#fff" />
        <circle cx="32.500" cy="9.500" r="6.500" fill="#5d5e68" />
      </svg>
      <span class="win-title">ospf-multiarea.png - draw.io</span>
      <div class="dots"><i></i><i></i><i></i></div>
    </div>

    <header class="header">
      <svg class="logo" width="32" height="36" viewBox="0 0 32 36">
        <rect width="32" height="36" rx="3" fill="#f2931e" />
        <path d="M16 11L9 23M16 11L23 23" stroke="#fff" stroke-width="1.800" />
        <rect x="11.500" y="6.500" width="9" height="8" rx="1.500" fill="#fff" /><rect x="4.500" y="20" width="9" height="8" rx="1.500" fill="#fff" /><rect x="18.500" y="20" width="9" height="8" rx="1.500" fill="#fff" />
      </svg>
      <div class="head-col">
        <div class="fname">ospf-multiarea.png</div>
        <nav class="menus">
          <span v-for="m in menus" :key="m.t" :style="{ width: m.w + 'px' }">{{ m.t }}</span>
          <em>All changes saved</em>
        </nav>
      </div>
    </header>

    <div class="toolbar">
      <template v-for="(t, i) in tools" :key="i">
        <span v-if="t.sep" class="sep"></span>
        <span v-else-if="t.zoom" class="zoom">100%<svg width="12" height="8"><path d="M2 1.500L6 5.500L10 1.500" fill="none" stroke="#555" stroke-width="1.200" /></svg></span>
        <svg v-else width="32" height="32" viewBox="0 0 32 32" v-html="t.i"></svg>
      </template>
      <span class="grow"></span>
      <svg width="32" height="32"><path d="M9.800 13V9.800H13M19 9.800H22.200V13M22.200 19V22.200H19M13 22.200H9.800V19" fill="none" stroke="#666" stroke-width="1.800" /></svg>
      <svg width="32" height="32"><rect x="9.800" y="9.800" width="12.500" height="12.500" rx="1" fill="none" stroke="#6a6a6a" stroke-width="1.600" /><path d="M18.500 10V22" stroke="#6a6a6a" stroke-width="1.300" /><path d="M12.500 13V19L16 16Z" fill="#444" /></svg>
      <svg width="32" height="32"><path d="M12 18L16 14L20 18" fill="none" stroke="#555" stroke-width="1.600" /></svg>
    </div>

    <main class="main">
      <aside class="sidebar">
        <div class="search"><span>router</span><svg width="12" height="12"><path d="M1.500 1.500L10 10M10 1.500L1.500 10" stroke="#333" stroke-width="1.500" /></svg></div>
        <div class="palette results">
          <svg v-for="(s, i) in results" :key="i" width="36" height="38" viewBox="-.4 -.4 36 38" v-html="s"></svg>
        </div>
        <button class="more-results">More Results</button>
        <div class="section scratch">
          <b class="tri"></b><span>Scratchpad</span>
          <svg width="80" height="20" fill="none" stroke="#6a6a6a" stroke-width="1.200">
            <circle cx="10" cy="10" r="5.500" /><path d="M8.300 8.700Q8.300 7 10 7T11.700 8.500Q11.700 9.300 10 10.700V11.300M10 12.300V13.300" />
            <path d="M26 10H34M30 6V14" stroke-width="1.400" />
            <path d="M45.500 14.500V12L52.500 5L55 7.500L48 14.500ZM51 6.500L53.500 9" /><path d="M66 6L74 14M74 6L66 14" />
          </svg>
        </div>
        <div class="drop">Drag elements here</div>
        <div class="section gen"><b class="tri"></b><span>General</span></div>
        <div class="palette general">
          <svg v-for="(s, i) in general" :key="i" width="36" height="38" viewBox="-.5 -.5 36 38" fill="none" stroke="#484a4c" stroke-width="1.300" v-html="s"></svg>
        </div>
        <button class="more-shapes"><svg width="10" height="10"><path d="M5 .5V9.500M.5 5H9.500" stroke="#333" stroke-width="1.300" /></svg>More Shapes</button>
        <i class="bar side-bar"></i>
      </aside>

      <section class="canvas">
        <div class="page">
          <svg width="851" height="865">
            <path v-for="c in clouds" :key="c" :d="c" fill="#fff" stroke="#000" stroke-width="1.100" />
            <path d="M130 235.500H301M350 240L512 242.500M560 240.500H721" stroke="#000" stroke-width="1.200" fill="none" />
            <g class="lbl">
              <text x="205" y="234.500">Area 12</text><text x="430" y="239.500">Area 0</text><text x="640" y="234.500">Area 34</text>
            </g>
            <g v-for="r in routers" :key="r.n" :transform="`translate(${r.x} 235.300)`">
              <circle r="24.800" fill="#fafafa" stroke="#3a7c98" stroke-width="1" />
              <path :d="ROUTER" fill="#005073" transform="translate(-.3 -.2)" />
              <text class="lbl" x="-.300" y="42.700">{{ r.n }}</text>
            </g>
            <g v-for="(f, i) in flows" :key="i">
              <path :d="f.d" fill="#fff" stroke="#000" stroke-width="1" />
              <rect :x="f.x" :y="f.y - 10" :width="f.w" height="14" fill="#fff" />
              <text class="flow" :x="f.x + f.w / 2" :y="f.y">{{ f.t }}</text>
            </g>
          </svg>
        </div>
        <i class="bar v-bar"></i><i class="bar h-bar"></i>
      </section>

      <aside class="format">
        <div class="tabs"><span>Diagram</span><span class="off">Style</span></div>
        <div class="body">
          <h4>View</h4>
          <div class="row">
            <input type="checkbox" checked /><label>Grid</label>
            <span class="num">10 pt</span>
            <svg class="spin" width="12" height="21"><path d="M1 7.500L5 3L9 7.500ZM1 13L5 17.500L9 13Z" fill="#444" /></svg>
            <span class="swatch"><i></i><svg width="12" height="12"><path d="M1 11L1.500 8.500L6.500 3.500L8.500 5.500L3.500 10.500ZM6 2.500L9.500 6M8 3.500L9.500 1.500L10.800 2.500L8.800 4.500" fill="none" stroke="#555" /></svg></span>
          </div>
          <div class="row"><input type="checkbox" checked /><label>Page View</label></div>
          <div class="row"><label class="ind">Background</label><button class="btn change">Change...</button></div>
          <div class="row"><input type="checkbox" /><label>Background Color</label></div>
          <div class="row"><input type="checkbox" /><label>Shadow</label></div>
          <h4 class="h2">Options</h4>
          <div class="row"><input type="checkbox" checked /><label>Connection Arrows</label></div>
          <div class="row"><input type="checkbox" checked /><label>Connection Points</label></div>
          <div class="row"><input type="checkbox" checked /><label>Guides</label></div>
          <div class="row"><input type="checkbox" /><label>Autosave</label></div>
          <h4 class="h3">Paper Size</h4>
          <div class="select"><span>US-Letter (8,5" x 11")</span><svg width="10" height="8"><path d="M1 2L5 6L9 2" fill="none" stroke="#333" stroke-width="2" /></svg></div>
          <div class="radios">
            <input type="radio" name="o" checked /><label>Portrait</label>
            <input type="radio" name="o" /><label>Landscape</label>
          </div>
          <button class="btn full">Edit Data...</button>
          <button class="btn full">Clear Default Style</button>
        </div>
      </aside>
    </main>

    <footer class="footer">
      <svg width="96" height="31"><path d="M30 10.500V21.500M24.500 16H35.500" stroke="#555" stroke-width="1.600" /><path d="M61 11.500H75M61 16H75M61 20.500H75" stroke="#666" stroke-width="1.600" /></svg>
      <div class="ptab">Page-1<svg width="10" height="8"><path d="M1 1.500L5 5.500L9 1.500" fill="none" stroke="#555" stroke-width="1.200" /></svg></div>
    </footer>

    <div class="taskbar">
      <div class="apps">
        <span v-for="(a, i) in apps" :key="i" :class="{ act: a.act }">
          <svg width="28" height="28" viewBox="0 0 28 28" v-html="a.i"></svg>
          <i v-if="a.u"></i>
          <svg v-if="a.c" class="plus" width="10" height="10"><circle cx="5" cy="5" r="5" fill="#dfe0e8" /><path d="M2.500 5H7.500M5 2.500V7.500" stroke="#fff" stroke-width="1.200" /></svg>
        </span>
      </div>
      <svg class="meters" width="130" height="5"><rect v-for="m in meters" :key="m[0]" :x="m[0] - 1350" :y="m[2] ? 0 : 1" width="6" :height="m[2] ? 2 : 1" :fill="m[1]" /></svg>
      <div class="pager"><i v-for="n in 6" :key="n" :class="{ on: n === 1 }"></i></div>
      <div class="tray"><svg v-for="(s, i) in tray" :key="i" width="16" height="17" v-html="s"></svg></div>
      <svg class="up" width="18" height="12"><path d="M1 10L9 2L17 10" fill="none" stroke="#d5dae8" stroke-width="1.200" /></svg>
      <div class="clock"><b>5:54 PM</b><span>5/23/25</span></div>
      <svg class="copy" width="18" height="19"><path d="M10 17.500H5.500V4.500H11L16 9.500V17.500ZM11 4.500V9.500H16M5.500 15H1.500V1H7.500L10 4" fill="none" stroke="#d5dae8" stroke-width="1.300" /></svg>
    </div>
  </div>
</template>

<style>
html, body { margin: 0; overflow: hidden; }
</style>

<style scoped>
.screen { width: 1920px; height: 1080px; display: flex; flex-direction: column; background: #f1f3f4; color: #3c3c3c; font: 12px "Noto Sans", sans-serif; overflow: hidden; }
.screen * { box-sizing: border-box; }
svg { display: block; flex: none; overflow: visible; }
button { font-family: "Liberation Sans", sans-serif; color: #3c3c3c; padding: 0; display: block; }

.titlebar { height: 24px; flex: none; background: #171826; display: flex; justify-content: space-between; }
.win-title { font-size: 13px; line-height: 24px; color: #6a6b76; padding-right: 21px; }
.dots { display: flex; gap: 8px; padding: 3px 5px 0 0; }
.dots i { width: 13px; height: 13px; border-radius: 50%; background: #5d5e68; }

.header { height: 65px; flex: none; border-bottom: 1px solid #dadce0; display: flex; padding: 14px 0 0 16px; }
.head-col { padding-left: 16px; }
.fname { font-size: 18px; line-height: 24px; margin-top: -6px; }
.menus { display: flex; padding-left: 6px; margin-top: 4px; font-size: 14px; line-height: 24px; }
.menus em { font-style: normal; font-size: 12px; color: #6c6c6c; }

.toolbar { height: 37px; flex: none; border-bottom: 1px solid #dadce0; display: flex; align-items: center; padding: 0 8px 0 16px; }
.sep { width: 1px; height: 20px; background: #dadce0; margin: 0 6px; }
.zoom { width: 66px; padding-left: 8px; font-size: 14px; display: flex; align-items: center; gap: 3px; white-space: nowrap; }
.grow { flex: 1; }

.main { height: 878px; flex: none; display: flex; }
.sidebar { width: 220px; border-right: 1px solid #dadce0; position: relative; flex: none; overflow: hidden; padding-top: 8px; }
.search { width: 193px; height: 28px; margin-left: 8px; border: 1px solid #d5d7da; border-radius: 14px; background: #fff; display: flex; align-items: center; justify-content: space-between; padding: 0 9px 0 10px; font: 12px "Liberation Sans", sans-serif; }
.palette { display: flex; flex-wrap: wrap; width: 180px; }
.results { margin: 1px 0 0 7px; height: 304px; }
.more-results { margin: 11px 0 0 55px; width: 107px; height: 30px; border: 0; border-radius: 15px; background: #c2e7ff; font-size: 14px; }
.section { display: flex; align-items: center; padding-left: 16px; font-size: 13px; font-weight: 500; height: 20px; }
.tri { border: 4px solid transparent; border-top: 4px solid #3c3c3c; border-bottom: 0; margin-right: 6px; }
.section span { width: 87px; }
.scratch { margin-top: 13px; }
.drop { width: 182px; height: 30px; margin: 10px 0 0 16px; border: 2px dotted #909294; border-radius: 9px; line-height: 26px; text-align: center; color: #888; }
.gen { margin-top: 15px; }
.general { margin: 4px 0 0 15px; height: 342px; }
.more-shapes { margin: 5px 0 0 52px; width: 123px; height: 30px; border: 0; border-radius: 4px; background: #c2e7ff; font-size: 14px; display: flex; align-items: center; justify-content: center; gap: 5px; }
.bar { position: absolute; background: #dcdee0; border-radius: 2px; }
.side-bar { left: 212px; top: 3px; width: 4px; height: 271px; }

.canvas { width: 1460px; background: #ebebeb; position: relative; flex: none; padding: 3px 0 0 297px; }
.page { width: 851px; height: 865px; overflow: hidden; background: linear-gradient(to right, #e1e1e1 1px, transparent 1px) 0 0 / 40px 40px, linear-gradient(#e1e1e1 1px, transparent 1px) 0 0 / 40px 40px, linear-gradient(to right, #f5f5f5 1px, transparent 1px) 0 0 / 10px 10px, linear-gradient(#f5f5f5 1px, transparent 1px) 0 0 / 10px 10px, #fff; box-shadow: 0 0 2px 1px #c9c9c9; clip-path: inset(-3px -3px 0 -3px); }
.v-bar { left: 1453px; top: 264px; width: 4px; height: 263px; }
.h-bar { left: 445px; top: 871px; width: 562px; height: 4px; }
.lbl { font: 12px "Liberation Sans", sans-serif; text-anchor: middle; fill: #000; }
.flow { font: 11px "Liberation Sans", sans-serif; text-anchor: middle; fill: #000; }

.format { width: 240px; border-left: 1px solid #dadce0; flex: none; }
.tabs { display: flex; height: 35px; font-size: 13px; text-align: center; line-height: 34px; }
.tabs span { width: 119px; }
.tabs .off { width: 120px; background: #e5e5e5; border-left: 1px solid #dadce0; border-bottom: 1px solid #dadce0; }
.body { padding: 12px 13px 0 14px; }
h4 { margin: 0; font-size: 12px; font-weight: 700; height: 24px; line-height: 18px; }
.body h4:first-child { height: 24.500px; line-height: 20px; }
.h2 { padding-top: 7px; height: 30.500px; }
.h3 { padding-top: 8px; height: 31px; }
.row { display: flex; align-items: center; height: 24px; }
.row input { margin: 0 6px 0 0; width: 13px; height: 13px; }
.ind { margin-left: 19px; }
.num { margin-left: auto; width: 49px; height: 22px; line-height: 20px; border: 1px solid #d5d7da; border-radius: 3px; background: #fff; text-align: right; padding-right: 1px; }
.spin { border: 1px solid #d5d7da; border-radius: 3px; margin-left: 1px; height: 22px; }
.swatch { width: 46px; height: 22px; border: 1px solid #d5d7da; border-radius: 3px; margin-left: 4px; display: flex; align-items: center; justify-content: space-between; padding: 0 4px 0 3px; }
.swatch i { width: 23px; height: 14px; background: #d0d0d0; border: 1px solid #dadada; }
.btn { height: 22px; border: 1px solid #d5d7da; border-radius: 3px; background: #f1f3f4; font-size: 13.333px; }
.change { width: 110px; margin-left: auto; }
.full { width: 212px; margin-bottom: 2px; }
.select { width: 210px; height: 22px; border: 1px solid #d5d7da; border-radius: 3px; display: flex; align-items: center; font: 13.333px "Liberation Sans", sans-serif; padding-right: 4px; }
.select span { flex: 1; text-align: center; padding-left: 2px; }
.radios { display: flex; height: 36.500px; padding: 7px 0 0 9px; }
.radios input { margin: 0 6px 0 0; width: 13px; height: 13px; }
.radios label { margin-right: 10px; line-height: 17px; }

.footer { height: 32px; flex: none; border-top: 1px solid #dadce0; display: flex; background: linear-gradient(#f1f3f4 70%, #e8eaeb); }
.ptab { width: 80px; background: #e0e7f5; color: #1b5bd0; font-size: 13px; display: flex; align-items: center; gap: 5px; padding-left: 16px; }

.taskbar { height: 44px; flex: none; background: #272641; display: flex; position: relative; }
.apps { display: flex; padding-left: 5px; }
.apps span { width: 50px; height: 44px; margin-right: 2px; position: relative; padding: 8px 0 0 12px; }
.apps .act { background: #4c4b65; }
.apps i { position: absolute; left: 4px; bottom: 0; width: 44px; height: 3px; background: #d3d4e2; }
.plus { position: absolute; left: 21px; top: 33px; }
.meters { position: absolute; left: 1350px; bottom: 0; }
.pager { display: grid; grid-template-columns: repeat(3, 23px); grid-auto-rows: 13px; gap: 1px; margin: 8px 0 0 594px; height: 27px; }
.pager i { background: #383752; }
.pager .on { background: #8cb0ea; }
.tray { display: flex; gap: 14px; padding: 13px 0 0 15px; }
.up { margin: 15px 0 0 11px; }
.clock { width: 84px; margin-left: -2px; text-align: center; color: #d9dce8; padding-top: 6px; }
.clock b { display: block; font-weight: 400; font-size: 16px; line-height: 21px; }
.clock span { display: block; font-size: 13px; line-height: 12px; margin-top: -3px; }
.copy { margin: 12px 0 0 5px; }
</style>
